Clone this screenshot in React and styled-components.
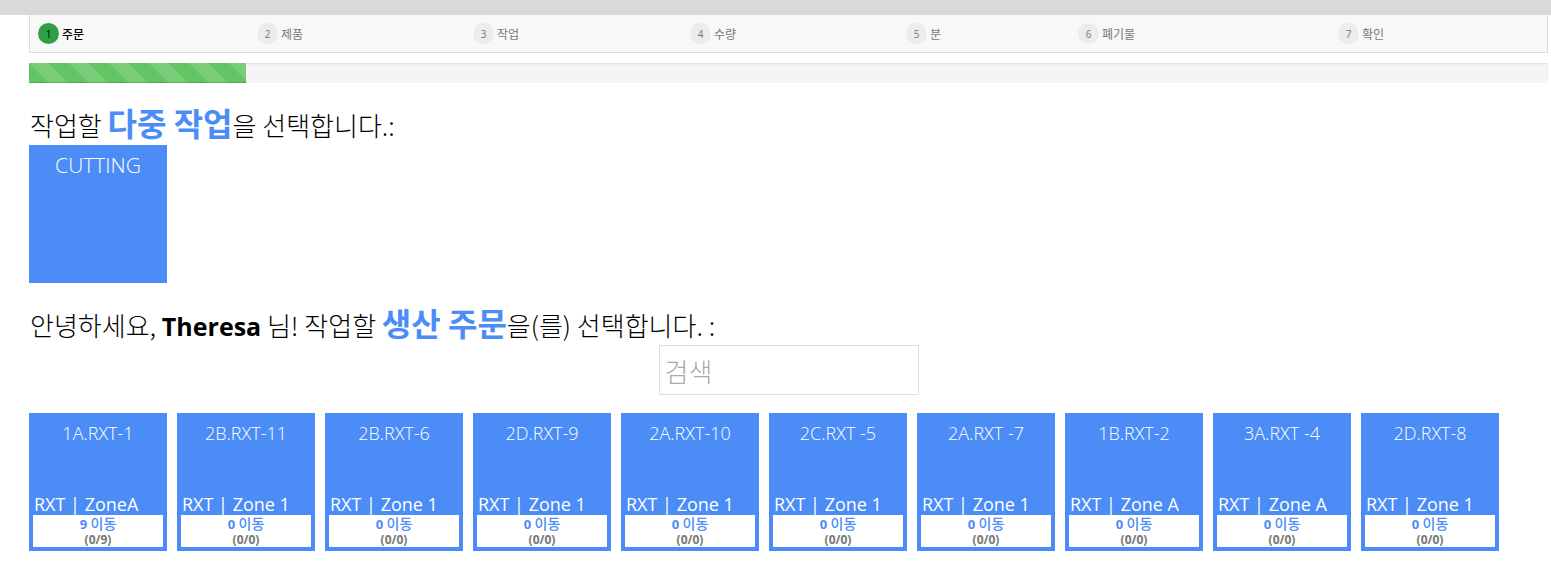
import React from "react";
import styled, { createGlobalStyle } from "styled-components";

const GlobalStyle = createGlobalStyle`
  html, body { margin: 0; padding: 0; background: #fff; }
  body { font-family: "Open Sans", "Noto Sans CJK KR", sans-serif; color: #000; }
  * { box-sizing: border-box; }
`;

const BLUE = "#4b8cf7";

const TopBar = styled.div`
  height: 15px;
  background: #d9d9d9;
`;

const Page = styled.div`
  padding: 0 3px 0 29px;
`;

const Stepper = styled.div`
  display: grid;
  grid-template-columns: 219px 216px 217px 216px 172px 260px 1fr;
  align-items: center;
  height: 38px;
  padding-left: 8px;
  background: #f8f8f8;
  border: 1px solid #dcdcdc;
  border-top: none;
`;

const Step = styled.div`
  display: flex;
  align-items: center;
  gap: 3px;
  font-family: "Noto Sans CJK KR", sans-serif;
  font-size: 12px;
  color: ${(p) => (p.$active ? "#000" : "#777")};
  font-weight: ${(p) => (p.$active ? 500 : 400)};
`;

const StepNum = styled.span`
  width: 21px;
  height: 21px;
  border-radius: 50%;
  display: inline-flex;
  align-items: center;
  justify-content: center;
  font-family: "Open Sans", sans-serif;
  font-size: 10px;
  background: ${(p) => (p.$active ? "#2ea043" : "#ececec")};
  color: ${(p) => (p.$active ? "#000" : "#777")};
`;

const Progress = styled.div`
  margin-top: 10px;
  height: 20px;
  background: #f5f5f5;
  box-shadow: inset 0 1px 2px rgba(0, 0, 0, 0.1);
  overflow: hidden;
`;

const ProgressFill = styled.div`
  height: 100%;
  background-color: #62c462;
  background-image: linear-gradient(
    45deg,
    rgba(255, 255, 255, 0.15) 25%,
    transparent 25%,
    transparent 50%,
    rgba(255, 255, 255, 0.15) 50%,
    rgba(255, 255, 255, 0.15) 75%,
    transparent 75%,
    transparent
  );
  background-size: 40px 40px;
  box-shadow: inset 0 -1px 0 rgba(0, 0, 0, 0.15);
`;

const Heading = styled.h2`
  margin: ${(p) => p.$mt}px 0 0 1px;
  font-family: "Noto Sans CJK KR", sans-serif;
  font-weight: 300;
  font-size: 26px;
  line-height: 40px;
  color: #000;
  white-space: nowrap;
`;

const Accent = styled.span`
  color: ${BLUE};
  font-weight: 700;
  font-size: 32px;
  line-height: 1;
`;

const Name = styled.span`
  font-family: "Open Sans", sans-serif;
  font-weight: 700;
  font-size: 25px;
  line-height: 1;
`;

const Tile = styled.div`
  width: 138px;
  height: 138px;
  background: ${BLUE};
  color: #fff;
  text-align: center;
  font-family: "Open Sans", sans-serif;
  font-weight: 300;
  font-size: 21px;
  line-height: 28px;
  padding-top: 6px;
`;

const SearchRow = styled.div`
  display: flex;
  justify-content: center;
`;

const Search = styled.input`
  width: 260px;
  height: 50px;
  border: 1px solid #dddddd;
  padding: 0 5px;
  font-family: "Noto Sans CJK KR", sans-serif;
  font-size: 26px;
  font-weight: 300;
  outline: none;
  &::placeholder { color: #aaa; }
`;

const Cards = styled.div`
  display: flex;
  flex-wrap: wrap;
  gap: 10px;
  margin-top: 18px;
`;

const Card = styled.div`
  width: 138px;
  height: 138px;
  background: ${BLUE};
  color: #fff;
  display: flex;
  flex-direction: column;
  padding: 8px 4px 4px;
  font-family: "Open Sans", sans-serif;
`;

const CardTitle = styled.div`
  text-align: center;
  font-weight: 300;
  font-size: 18px;
  line-height: 24px;
  flex: 1;
`;

const Zone = styled.div`
  font-size: 18px;
  line-height: 20px;
  padding-left: 1px;
  margin-bottom: 1px;
  white-space: nowrap;
`;

const Count = styled.div`
  height: 32px;
  background: #fff;
  text-align: center;
  padding-top: 1px;
`;

const Moves = styled.div`
  color: ${BLUE};
  font-size: 13px;
  line-height: 15px;
  font-weight: 700;
  span {
    font-family: "Noto Sans CJK KR", sans-serif;
    font-weight: 500;
    font-size: 14px;
  }
`;

const Ratio = styled.div`
  color: #777;
  font-size: 12px;
  line-height: 15px;
  font-weight: 700;
`;

const steps = ["주문", "제품", "작업", "수량", "분", "폐기물", "확인"];

const orders = [
  { code: "1A.RXT-1", zone: "RXT | ZoneA", n: 9, total: 9 },
  { code: "2B.RXT-11", zone: "RXT | Zone 1", n: 0, total: 0 },
  { code: "2B.RXT-6", zone: "RXT | Zone 1", n: 0, total: 0 },
  { code: "2D.RXT-9", zone: "RXT | Zone 1", n: 0, total: 0 },
  { code: "2A.RXT-10", zone: "RXT | Zone 1", n: 0, total: 0 },
  { code: "2C.RXT -5", zone: "RXT | Zone 1", n: 0, total: 0 },
  { code: "2A.RXT -7", zone: "RXT | Zone 1", n: 0, total: 0 },
  { code: "1B.RXT-2", zone: "RXT | Zone A", n: 0, total: 0 },
  { code: "3A.RXT -4", zone: "RXT | Zone A", n: 0, total: 0 },
  { code: "2D.RXT-8", zone: "RXT | Zone 1", n: 0, total: 0 },
];

export default function App() {
  return (
    <>
      <GlobalStyle />
      <TopBar />
      <Page>
        <Stepper>
          {steps.map((s, i) => (
            <Step key={s} $active={i === 0}>
              <StepNum $active={i === 0}>{i + 1}</StepNum>
              {s}
            </Step>
          ))}
        </Stepper>
        <Progress>
          <ProgressFill style={{ width: `${100 / 7}%` }} />
        </Progress>

        <Heading $mt={22}>
          작업할 <Accent>다중 작업</Accent>을 선택합니다.:
        </Heading>
        <Tile>CUTTING</Tile>

        <Heading $mt={22}>
          안녕하세요, <Name>Theresa</Name> 님! 작업할 <Accent>생산 주문</Accent>을(를) 선택합니다. :
        </Heading>
        <SearchRow>
          <Search placeholder="검색" />
        </SearchRow>

        <Cards>
          {orders.map((o) => (
            <Card key={o.code}>
              <CardTitle>{o.code}</CardTitle>
              <Zone>{o.zone}</Zone>
              <Count>
                <Moves>
                  {o.n} <span>이동</span>
                </Moves>
                <Ratio>(0/{o.total})</Ratio>
              </Count>
            </Card>
          ))}
        </Cards>
      </Page>
    </>
  );
}
